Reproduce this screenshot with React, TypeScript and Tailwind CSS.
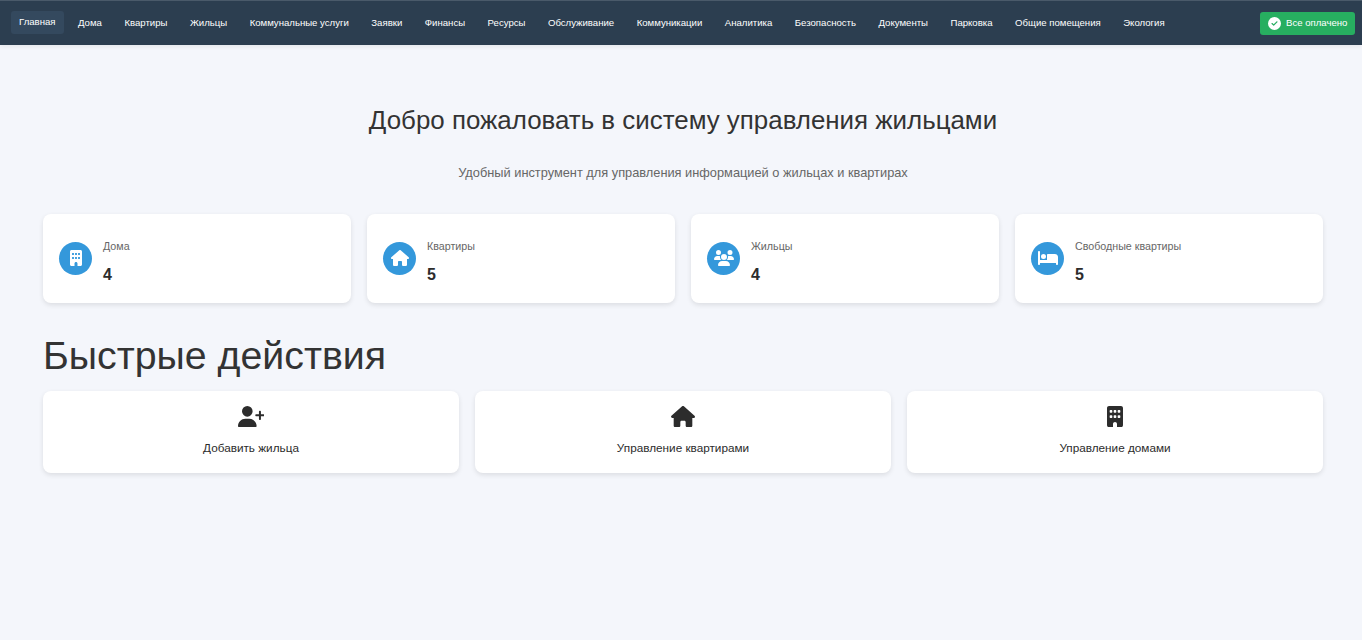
import { FaBuilding, FaHouse, FaUsers, FaBed, FaUserPlus, FaCircleCheck } from "react-icons/fa6";

const nav = ["Дома","Квартиры","Жильцы","Коммунальные услуги","Заявки","Финансы","Ресурсы","Обслуживание","Коммуникации","Аналитика","Безопасность","Документы","Парковка","Общие помещения","Экология"];
const stats = [
  { icon: FaBuilding, label: "Дома", value: "4", cls: "h-[16px] w-[12px]" },
  { icon: FaHouse, label: "Квартиры", value: "5", cls: "h-[16px] w-[18px]" },
  { icon: FaUsers, label: "Жильцы", value: "4", cls: "h-[16px] w-[20px]" },
  { icon: FaBed, label: "Свободные квартиры", value: "5", cls: "h-[16px] w-[20px]" },
];
const actions = [
  { icon: FaUserPlus, label: "Добавить жильца", cls: "h-[21.3px] w-[26.6px]" },
  { icon: FaHouse, label: "Управление квартирами", cls: "h-[21.3px] w-[24px]" },
  { icon: FaBuilding, label: "Управление домами", cls: "h-[21.3px] w-[16px]" },
];

export default function App() {
  return (
    <div className="min-h-[640px] bg-[#f4f6fb] font-['Liberation_Sans',Arial,sans-serif] text-[#333333]">
      <header className="flex h-[45px] items-center justify-between border-t border-t-[#4a5a6a] bg-[#2c3e50] pl-[11px] pr-[7px] shadow-[0_2px_4px_rgba(0,0,0,0.06)]">
        <nav className="flex items-center gap-[6.5px] text-[9.6px] text-white">
          <a className="-translate-y-px rounded-[3px] bg-[#34495e] px-2 pt-[5px] pb-[7px] leading-[11px]">Главная</a>
          {nav.map((n) => (
            <a key={n} className="px-2 pt-[5px] pb-[7px] leading-[11px]">{n}</a>
          ))}
        </nav>
        <div className="flex h-[23px] w-[95px] items-center gap-[5px] rounded-[3px] bg-[#27ae60] pl-2 text-[9.6px] text-white">
          <FaCircleCheck className="text-[13px]" />
          <span>Все оплачено</span>
        </div>
      </header>

      <main className="pl-[43px] pr-[39px]">
        <h2 className="pt-[58px] text-center text-[25.9px] leading-[34px] font-normal">Добро пожаловать в систему управления жильцами</h2>
        <p className="mt-[28px] text-center text-[12.8px] leading-[16px] text-[#666666]">Удобный инструмент для управления информацией о жильцах и квартирах</p>

        <section className="mt-[33px] grid grid-cols-4 gap-4">
          {stats.map((s) => (
            <div key={s.label} className="flex h-[89px] items-center gap-[10.7px] rounded-lg bg-white px-4 shadow-[0_2px_5px_rgba(0,0,0,0.1)]">
              <div className="flex h-[33.3px] w-[33.3px] items-center justify-center rounded-full bg-[#3498db] text-white">
                <s.icon className={s.cls} />
              </div>
              <div className="pt-[6px]">
                <div className="text-[10.7px] leading-[13px] text-[#666666]">{s.label}</div>
                <div className="mt-[13px] text-[16px] leading-[18px] font-bold text-[#2c2c2c]">{s.value}</div>
              </div>
            </div>
          ))}
        </section>

        <h1 className="mt-[29px] text-[39.3px] leading-[46px] font-normal">Быстрые действия</h1>

        <section className="mt-[13px] grid grid-cols-3 gap-4">
          {actions.map((a) => (
            <div key={a.label} className="flex h-[82px] flex-col items-center rounded-lg bg-white pt-[15px] shadow-[0_2px_5px_rgba(0,0,0,0.1)]">
              <a.icon className={`${a.cls} text-[#2c2c2c]`} />
              <span className="mt-[14px] text-[11.75px] leading-[14px] text-[#2c2c2c]">{a.label}</span>
            </div>
          ))}
        </section>
      </main>
    </div>
  );
}
